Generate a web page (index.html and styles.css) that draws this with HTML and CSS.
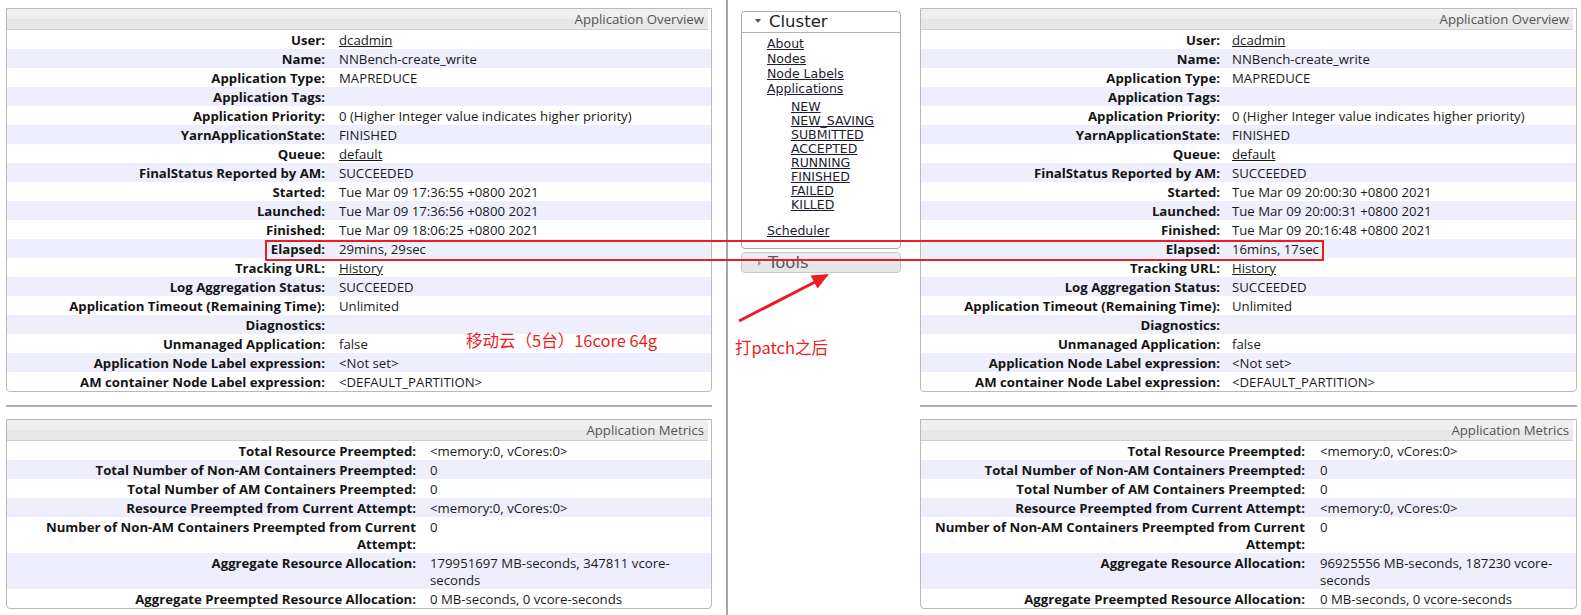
FILE: index.html
```html
<!DOCTYPE html>
<html lang="en">
<head>
<meta charset="utf-8">
<title>Application Overview</title>
<link rel="stylesheet" href="styles.css">
</head>
<body>
<div class="page">
  <div class="col col-left">
    <div class="panel ov-left">
      <div class="phead">Application Overview</div>
      <div class="r"><div class="k">User:</div><div class="v"><a href="#">dcadmin</a></div></div>
      <div class="r s"><div class="k">Name:</div><div class="v">NNBench-create_write</div></div>
      <div class="r"><div class="k">Application Type:</div><div class="v">MAPREDUCE</div></div>
      <div class="r s"><div class="k">Application Tags:</div><div class="v"></div></div>
      <div class="r"><div class="k">Application Priority:</div><div class="v">0 (Higher Integer value indicates higher priority)</div></div>
      <div class="r s"><div class="k">YarnApplicationState:</div><div class="v">FINISHED</div></div>
      <div class="r"><div class="k">Queue:</div><div class="v"><a href="#">default</a></div></div>
      <div class="r s"><div class="k">FinalStatus Reported by AM:</div><div class="v">SUCCEEDED</div></div>
      <div class="r"><div class="k">Started:</div><div class="v">Tue Mar 09 17:36:55 +0800 2021</div></div>
      <div class="r s"><div class="k">Launched:</div><div class="v">Tue Mar 09 17:36:56 +0800 2021</div></div>
      <div class="r"><div class="k">Finished:</div><div class="v">Tue Mar 09 18:06:25 +0800 2021</div></div>
      <div class="r s"><div class="k">Elapsed:</div><div class="v">29mins, 29sec</div></div>
      <div class="r"><div class="k">Tracking URL:</div><div class="v"><a href="#">History</a></div></div>
      <div class="r s"><div class="k">Log Aggregation Status:</div><div class="v">SUCCEEDED</div></div>
      <div class="r"><div class="k">Application Timeout (Remaining Time):</div><div class="v">Unlimited</div></div>
      <div class="r s"><div class="k">Diagnostics:</div><div class="v"></div></div>
      <div class="r"><div class="k">Unmanaged Application:</div><div class="v">false</div></div>
      <div class="r s"><div class="k">Application Node Label expression:</div><div class="v">&lt;Not set&gt;</div></div>
      <div class="r"><div class="k">AM container Node Label expression:</div><div class="v">&lt;DEFAULT_PARTITION&gt;</div></div>
    </div>
    <div class="hr"></div>
    <div class="panel mt-left">
      <div class="phead">Application Metrics</div>
      <div class="r"><div class="k">Total Resource Preempted:</div><div class="v">&lt;memory:0, vCores:0&gt;</div></div>
      <div class="r s"><div class="k">Total Number of Non-AM Containers Preempted:</div><div class="v">0</div></div>
      <div class="r"><div class="k">Total Number of AM Containers Preempted:</div><div class="v">0</div></div>
      <div class="r s"><div class="k">Resource Preempted from Current Attempt:</div><div class="v">&lt;memory:0, vCores:0&gt;</div></div>
      <div class="r"><div class="k">Number of Non-AM Containers Preempted from Current Attempt:</div><div class="v">0</div></div>
      <div class="r s"><div class="k">Aggregate Resource Allocation:</div><div class="v">179951697 MB-seconds, 347811 vcore-seconds</div></div>
      <div class="r"><div class="k">Aggregate Preempted Resource Allocation:</div><div class="v">0 MB-seconds, 0 vcore-seconds</div></div>
    </div>
  </div>

  <div class="vline"></div>

  <div class="sidebar">
    <div class="navbox">
      <div class="navhead"><span class="tri-down"></span>Cluster</div>
      <ul class="nav">
        <li><a href="#">About</a></li>
        <li><a href="#">Nodes</a></li>
        <li><a href="#">Node Labels</a></li>
        <li><a href="#">Applications</a>
          <ul class="sub">
            <li><a href="#">NEW</a></li>
            <li><a href="#">NEW_SAVING</a></li>
            <li><a href="#">SUBMITTED</a></li>
            <li><a href="#">ACCEPTED</a></li>
            <li><a href="#">RUNNING</a></li>
            <li><a href="#">FINISHED</a></li>
            <li><a href="#">FAILED</a></li>
            <li><a href="#">KILLED</a></li>
          </ul>
        </li>
        <li class="sched"><a href="#">Scheduler</a></li>
      </ul>
    </div>
    <div class="toolsbox"><span class="tri-right"></span>Tools</div>
  </div>

  <div class="col col-right">
    <div class="panel ov-right">
      <div class="phead">Application Overview</div>
      <div class="r"><div class="k">User:</div><div class="v"><a href="#">dcadmin</a></div></div>
      <div class="r s"><div class="k">Name:</div><div class="v">NNBench-create_write</div></div>
      <div class="r"><div class="k">Application Type:</div><div class="v">MAPREDUCE</div></div>
      <div class="r s"><div class="k">Application Tags:</div><div class="v"></div></div>
      <div class="r"><div class="k">Application Priority:</div><div class="v">0 (Higher Integer value indicates higher priority)</div></div>
      <div class="r s"><div class="k">YarnApplicationState:</div><div class="v">FINISHED</div></div>
      <div class="r"><div class="k">Queue:</div><div class="v"><a href="#">default</a></div></div>
      <div class="r s"><div class="k">FinalStatus Reported by AM:</div><div class="v">SUCCEEDED</div></div>
      <div class="r"><div class="k">Started:</div><div class="v">Tue Mar 09 20:00:30 +0800 2021</div></div>
      <div class="r s"><div class="k">Launched:</div><div class="v">Tue Mar 09 20:00:31 +0800 2021</div></div>
      <div class="r"><div class="k">Finished:</div><div class="v">Tue Mar 09 20:16:48 +0800 2021</div></div>
      <div class="r s"><div class="k">Elapsed:</div><div class="v">16mins, 17sec</div></div>
      <div class="r"><div class="k">Tracking URL:</div><div class="v"><a href="#">History</a></div></div>
      <div class="r s"><div class="k">Log Aggregation Status:</div><div class="v">SUCCEEDED</div></div>
      <div class="r"><div class="k">Application Timeout (Remaining Time):</div><div class="v">Unlimited</div></div>
      <div class="r s"><div class="k">Diagnostics:</div><div class="v"></div></div>
      <div class="r"><div class="k">Unmanaged Application:</div><div class="v">false</div></div>
      <div class="r s"><div class="k">Application Node Label expression:</div><div class="v">&lt;Not set&gt;</div></div>
      <div class="r"><div class="k">AM container Node Label expression:</div><div class="v">&lt;DEFAULT_PARTITION&gt;</div></div>
    </div>
    <div class="hr"></div>
    <div class="panel mt-right">
      <div class="phead">Application Metrics</div>
      <div class="r"><div class="k">Total Resource Preempted:</div><div class="v">&lt;memory:0, vCores:0&gt;</div></div>
      <div class="r s"><div class="k">Total Number of Non-AM Containers Preempted:</div><div class="v">0</div></div>
      <div class="r"><div class="k">Total Number of AM Containers Preempted:</div><div class="v">0</div></div>
      <div class="r s"><div class="k">Resource Preempted from Current Attempt:</div><div class="v">&lt;memory:0, vCores:0&gt;</div></div>
      <div class="r"><div class="k">Number of Non-AM Containers Preempted from Current Attempt:</div><div class="v">0</div></div>
      <div class="r s"><div class="k">Aggregate Resource Allocation:</div><div class="v">96925556 MB-seconds, 187230 vcore-seconds</div></div>
      <div class="r"><div class="k">Aggregate Preempted Resource Allocation:</div><div class="v">0 MB-seconds, 0 vcore-seconds</div></div>
    </div>
  </div>
</div>

<div class="mark-box"></div>
<svg class="arrow" width="1581" height="615" viewBox="0 0 1581 615" xmlns="http://www.w3.org/2000/svg">
  <line x1="739" y1="321" x2="815" y2="282" stroke="#ed1c24" stroke-width="3"/>
  <polygon points="829,274 810.5,275.5 817.5,288.5" fill="#ed1c24"/>
</svg>
<div class="note note-left">移动云（5台）16core 64g</div>
<div class="note note-mid">打patch之后</div>
</body>
</html>
```

FILE: styles.css
```css
html, body {
  margin: 0;
  padding: 0;
  background: #fff;
}
body {
  width: 1581px;
  height: 615px;
  overflow: hidden;
  position: relative;
  font-family: "Open Sans", "Noto Sans", sans-serif;
  font-size: 13.2px;
  color: #1a1a1a;
}
.page {
  display: flex;
  height: 615px;
}
.col {
  padding-top: 8px;
  box-sizing: border-box;
}
.col-left {
  margin-left: 6px;
  width: 706px;
}
.col-right {
  margin-left: 19px;
  width: 657px;
}
.vline {
  width: 2px;
  height: 615px;
  margin-left: 14px;
  background: #a6a6a6;
}
.panel {
  border: 1px solid #b9b9b9;
  border-radius: 0 0 4px 4px;
}
.phead {
  height: 20px;
  margin-right: 3px;
  border-bottom: 1px solid #cfcfcf;
  background: linear-gradient(to bottom, #efefef 0%, #efefef 50%, #e6e6e6 52%, #e8e8e8 100%);
  color: #555;
  text-align: right;
  line-height: 21px;
  padding-right: 4px;
}
.r {
  display: grid;
  grid-template-columns: var(--lw) 1fr;
  line-height: 17px;
  padding-top: 2px;
}
.r.s {
  background: #eeeefc;
}
.k {
  font-weight: bold;
  text-align: right;
  color: #141414;
}
.v {
  padding-left: var(--vp);
  padding-right: var(--vr, 0px);
}
.v a, .nav a {
  color: inherit;
  text-decoration: underline;
}
.ov-left { --lw: 318px; --vp: 14px; }
.ov-right { --lw: 299px; --vp: 12px; }
.mt-left { --lw: 409px; --vp: 14px; --vr: 30px; }
.mt-right { --lw: 384px; --vp: 15px; --vr: 0px; }
.hr {
  height: 2px;
  margin-top: 13px;
  background: #acacac;
}
.hr + .panel {
  margin-top: 12px;
}

/* sidebar */
.sidebar {
  margin-left: 13px;
  width: 160px;
  padding-top: 11px;
  font-family: "DejaVu Sans", Verdana, sans-serif;
}
.navbox {
  border: 1px solid #aaa;
  border-radius: 4px;
  padding-bottom: 10px;
}
.navhead {
  height: 20px;
  border-bottom: 1px solid #b3b3b3;
  font-size: 16.5px;
  line-height: 20px;
  color: #222;
  padding-left: 13px;
  display: flex;
  align-items: center;
}
.tri-down {
  width: 0;
  height: 0;
  border-left: 3.5px solid transparent;
  border-right: 3.5px solid transparent;
  border-top: 4px solid #555;
  margin-right: 8px;
  margin-top: -2px;
}
.nav {
  list-style: none;
  margin: 0;
  padding: 3px 0 0 25px;
  font-size: 12.5px;
  line-height: 15px;
  color: #1c1c30;
}
.nav li {
  margin: 0;
}
.sub {
  list-style: none;
  margin: 4px 0 0 0;
  padding: 0 0 0 24px;
  line-height: 14px;
}
.nav .sched {
  margin-top: 11px;
}
.toolsbox {
  margin-top: 3px;
  height: 19px;
  border: 1px solid #c8c8c8;
  border-radius: 4px;
  background: linear-gradient(to bottom, #ededed 0%, #ededed 50%, #e4e4e4 55%, #e6e6e6 100%);
  color: #5a5a5a;
  font-size: 16.5px;
  line-height: 19px;
  padding-left: 16px;
  display: flex;
  align-items: center;
}
.tri-right {
  width: 0;
  height: 0;
  border-top: 3px solid transparent;
  border-bottom: 3px solid transparent;
  border-left: 3.5px solid #999;
  margin-right: 7px;
}

/* annotations */
.mark-box {
  position: absolute;
  left: 265px;
  top: 240px;
  width: 1059px;
  height: 21px;
  box-sizing: border-box;
  border: 2px solid #ed1c24;
}
.arrow {
  position: absolute;
  left: 0;
  top: 0;
  pointer-events: none;
}
.note {
  position: absolute;
  color: #ed1c24;
  font-family: "Noto Sans CJK SC", "Noto Sans", sans-serif;
  font-size: 16.5px;
  line-height: 18px;
  white-space: nowrap;
}
.note-left {
  left: 466px;
  top: 331px;
}
.note-mid {
  left: 735px;
  top: 338px;
}
```
